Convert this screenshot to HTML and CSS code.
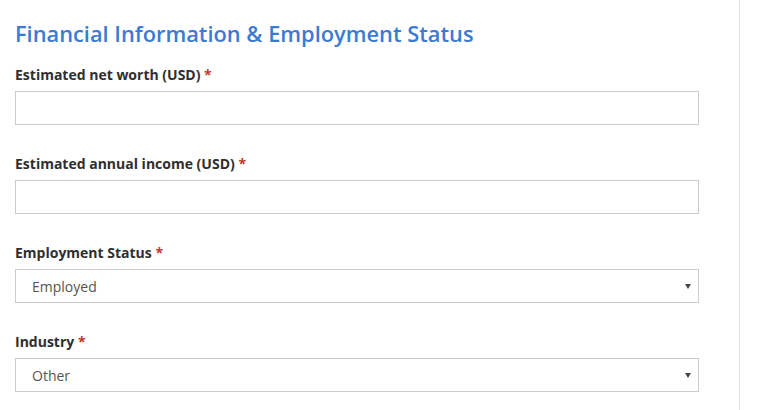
FILE: index.html
```html
<!DOCTYPE html>
<html lang="en">
<head>
    <meta charset="UTF-8">
    <meta name="viewport" content="width=device-width, initial-scale=1.0">
    <title>Financial Information</title>
    <link rel="stylesheet" href="styles.css">
</head>
<body>
    <div class="panel">
        <h2 class="section-title">Financial Information &amp; Employment Status</h2>
        <form>
            <div class="form-group">
                <label for="networth">Estimated net worth (USD) <span class="req">*</span></label>
                <input type="text" id="networth" class="form-control">
            </div>
            <div class="form-group">
                <label for="income">Estimated annual income (USD) <span class="req">*</span></label>
                <input type="text" id="income" class="form-control">
            </div>
            <div class="form-group">
                <label for="status">Employment Status <span class="req">*</span></label>
                <div class="select-wrap">
                    <select id="status" class="form-control">
                        <option>Employed</option>
                        <option>Self-employed</option>
                        <option>Unemployed</option>
                        <option>Retired</option>
                    </select>
                </div>
            </div>
            <div class="form-group">
                <label for="industry">Industry <span class="req">*</span></label>
                <div class="select-wrap">
                    <select id="industry" class="form-control">
                        <option>Other</option>
                        <option>Finance</option>
                        <option>Technology</option>
                    </select>
                </div>
            </div>
        </form>
    </div>
</body>
</html>
```

FILE: styles.css
```css
body {
    margin: 0;
    padding: 0;
    background: #fff;
    font-family: "Open Sans", "Noto Sans", Arial, sans-serif;
    color: #333;
}
.panel {
    width: 740px;
    box-sizing: border-box;
    min-height: 410px;
    padding: 22px 40px 0 15px;
    border-right: 1px solid #e3e3e3;
}
.section-title {
    margin: 0 0 19px;
    font-size: 21.8px;
    font-weight: 600;
    line-height: 24px;
    color: #3b7bd4;
}
.form-group {
    margin-bottom: 29px;
}
.form-group label {
    display: block;
    margin-bottom: 6px;
    font-size: 14px;
    font-weight: 700;
    line-height: 20px;
    color: #2f2f2f;
}
.req {
    color: #c0392b;
}
.form-control {
    display: block;
    width: 100%;
    height: 34px;
    box-sizing: border-box;
    margin: 0;
    padding: 0 16px;
    border: 1px solid #ccc;
    border-radius: 0;
    background: #fff;
    font-family: inherit;
    font-size: 14px;
    color: #555;
    outline: none;
}
.select-wrap {
    position: relative;
}
.select-wrap select {
    -webkit-appearance: none;
    appearance: none;
}
.select-wrap::after {
    content: "";
    position: absolute;
    right: 8px;
    top: 15px;
    width: 0;
    height: 0;
    border-left: 3px solid transparent;
    border-right: 3px solid transparent;
    border-top: 5px solid #444;
    pointer-events: none;
}
```
